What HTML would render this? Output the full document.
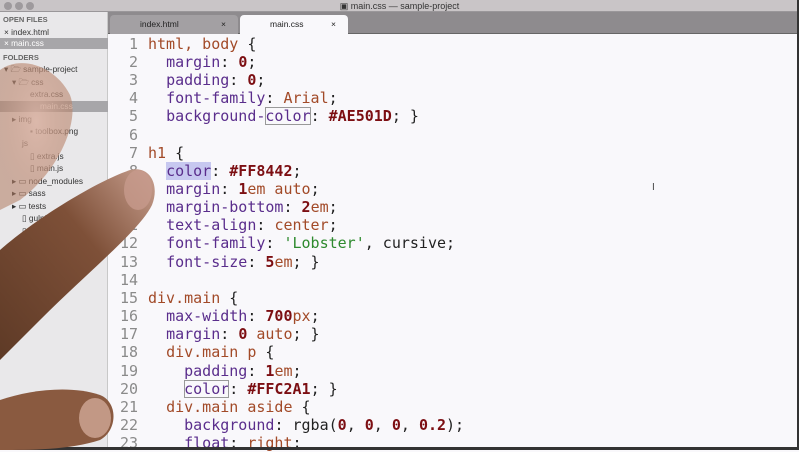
<!DOCTYPE html>
<html><head><meta charset="utf-8"><style>
*{margin:0;padding:0;box-sizing:border-box}
body{width:799px;height:450px;overflow:hidden;background:#f9f8fb;position:relative;font-family:"Liberation Sans",sans-serif}
#title{position:absolute;left:0;top:0;width:799px;height:12px;background:#c9c5c7;border-bottom:1px solid #9a979a;font-size:9px;color:#333;text-align:center;line-height:12px}
.dot{position:absolute;top:2px;width:8px;height:8px;border-radius:50%;background:#9e9a9d}
#side{position:absolute;left:0;top:12px;width:108px;height:438px;background:#e9e8ea;border-right:1px solid #c8c8c8;font-size:8.3px;color:#333}
#side div{position:absolute;white-space:nowrap}
.hd{color:#666;font-weight:bold;font-size:7.5px}
#tabs{position:absolute;left:108px;top:12px;width:691px;height:22px;background:#8e8b8e;border-bottom:1px solid #666}
.tab{position:absolute;top:3px;height:19px;font-size:8.5px;line-height:19px;padding-left:30px}
#code{position:absolute;left:108px;top:34px;width:689px;height:413px;font-family:"DejaVu Sans Mono","Liberation Mono",monospace;font-size:15px}
.ln{position:absolute;left:0;width:30px;text-align:right;color:#8a8a8a}
.c{position:absolute;left:40px;white-space:pre;color:#222}
.s{color:#a24a28}.p{color:#5a2d8c}.n{color:#7c0e12;font-weight:bold}.v{color:#a24a28}.g{color:#2e8a2e}
.box{outline:1px solid #999;outline-offset:-1px}
.sel{background:#c7c8f0}
</style></head><body>
<div id="title"><span class="dot" style="left:4px"></span><span class="dot" style="left:15px"></span><span class="dot" style="left:26px"></span>▣ main.css — sample-project</div>
<div id="side">
<div class="hd" style="left:3px;top:3px">OPEN FILES</div>
<div style="left:4px;top:15px">× index.html</div>
<div style="left:0;top:26px;width:108px;height:11px;background:#a7a6a9;color:#fff;padding-left:4px">× main.css</div>
<div class="hd" style="left:3px;top:41px">FOLDERS</div>
<div style="left:4px;top:52px">▾ 🗁 sample-project</div>
<div style="left:12px;top:65px">▾ 🗁 css</div>
<div style="left:30px;top:77px">extra.css</div>
<div style="left:0;top:89px;width:108px;height:11px;background:#a7a6a9;color:#fff;padding-left:40px">main.css</div>
<div style="left:12px;top:102px">▸ img</div>
<div style="left:30px;top:114px">▪ toolbox.png</div>
<div style="left:22px;top:126px">js</div>
<div style="left:30px;top:139px">▯ extra.js</div>
<div style="left:30px;top:151px">▯ main.js</div>
<div style="left:12px;top:164px">▸ ▭ node_modules</div>
<div style="left:12px;top:176px">▸ ▭ sass</div>
<div style="left:12px;top:189px">▸ ▭ tests</div>
<div style="left:22px;top:201px">▯ gulpfile.js</div>
<div style="left:22px;top:214px">▯ index.html</div>
</div>
<div id="tabs">
<div class="tab" style="left:2px;width:128px;background:#a3a0a3;color:#222;border-radius:4px 4px 0 0">index.html<span style="position:absolute;right:12px">×</span></div>
<div class="tab" style="left:132px;width:108px;background:#f9f8fb;color:#222;border-radius:4px 4px 0 0">main.css<span style="position:absolute;right:12px">×</span></div>
</div>
<div id="code">
<div class="ln" style="top:1px">1</div><div class="c" style="top:1px"><span class="s">html, body</span> {</div>
<div class="ln" style="top:19px">2</div><div class="c" style="top:19px">  <span class="p">margin</span>: <span class="n">0</span>;</div>
<div class="ln" style="top:37px">3</div><div class="c" style="top:37px">  <span class="p">padding</span>: <span class="n">0</span>;</div>
<div class="ln" style="top:55px">4</div><div class="c" style="top:55px">  <span class="p">font-family</span>: <span class="v">Arial</span>;</div>
<div class="ln" style="top:73px">5</div><div class="c" style="top:73px">  <span class="p">background-<span class="box">color</span></span>: <span class="n">#AE501D</span>; }</div>
<div class="ln" style="top:92px">6</div>
<div class="ln" style="top:110px">7</div><div class="c" style="top:110px"><span class="s">h1</span> {</div>
<div class="ln" style="top:128px">8</div><div class="c" style="top:128px">  <span class="p sel">color</span>: <span class="n">#FF8442</span>;</div>
<div class="ln" style="top:146px">9</div><div class="c" style="top:146px">  <span class="p">margin</span>: <span class="n">1</span><span class="v">em auto</span>;</div>
<div class="ln" style="top:164px">10</div><div class="c" style="top:164px">  <span class="p">margin-bottom</span>: <span class="n">2</span><span class="v">em</span>;</div>
<div class="ln" style="top:182px">11</div><div class="c" style="top:182px">  <span class="p">text-align</span>: <span class="v">center</span>;</div>
<div class="ln" style="top:200px">12</div><div class="c" style="top:200px">  <span class="p">font-family</span>: <span class="g">'Lobster'</span>, cursive;</div>
<div class="ln" style="top:219px">13</div><div class="c" style="top:219px">  <span class="p">font-size</span>: <span class="n">5</span><span class="v">em</span>; }</div>
<div class="ln" style="top:237px">14</div>
<div class="ln" style="top:255px">15</div><div class="c" style="top:255px"><span class="s">div.main</span> {</div>
<div class="ln" style="top:273px">16</div><div class="c" style="top:273px">  <span class="p">max-width</span>: <span class="n">700</span><span class="v">px</span>;</div>
<div class="ln" style="top:291px">17</div><div class="c" style="top:291px">  <span class="p">margin</span>: <span class="n">0</span> <span class="v">auto</span>; }</div>
<div class="ln" style="top:309px">18</div><div class="c" style="top:309px">  <span class="s">div.main p</span> {</div>
<div class="ln" style="top:328px">19</div><div class="c" style="top:328px">    <span class="p">padding</span>: <span class="n">1</span><span class="v">em</span>;</div>
<div class="ln" style="top:346px">20</div><div class="c" style="top:346px">    <span class="p box">color</span>: <span class="n">#FFC2A1</span>; }</div>
<div class="ln" style="top:364px">21</div><div class="c" style="top:364px">  <span class="s">div.main aside</span> {</div>
<div class="ln" style="top:382px">22</div><div class="c" style="top:382px">    <span class="p">background</span>: rgba(<span class="n">0</span>, <span class="n">0</span>, <span class="n">0</span>, <span class="n">0.2</span>);</div>
<div class="ln" style="top:400px">23</div><div class="c" style="top:400px">    <span class="p">float</span>: <span class="v">right</span>;</div>
</div>
<div style="position:absolute;left:652px;top:182px;font-size:10px;color:#444">I</div>
<div style="position:absolute;right:0;top:0;width:2px;height:450px;background:#333"></div>
<div style="position:absolute;left:0;bottom:0;width:799px;height:3px;background:#333"></div>
<svg width="799" height="450" style="position:absolute;left:0;top:0">
<defs>
<linearGradient id="f1" x1="0" y1="1" x2="1" y2="0"><stop offset="0" stop-color="#5e3a26"/><stop offset="0.6" stop-color="#7e5038"/><stop offset="1" stop-color="#c9a090"/></linearGradient>
<radialGradient id="f2" cx="0.5" cy="0.4" r="0.6"><stop offset="0" stop-color="#d9b0a0" stop-opacity="0.85"/><stop offset="1" stop-color="#b07a60" stop-opacity="0.55"/></radialGradient>
</defs>
<path d="M0,70 C20,55 55,65 70,95 C80,120 60,170 20,200 L0,210 Z" fill="url(#f2)"/>
<path d="M0,250 C40,215 100,180 130,170 C150,165 160,185 152,205 C140,230 90,270 40,320 L0,360 Z" fill="url(#f1)"/>
<ellipse cx="138" cy="190" rx="14" ry="20" fill="#c79a8c" opacity="0.8"/>
<path d="M0,400 C30,390 70,385 100,395 C118,402 118,430 100,440 C70,450 30,450 0,450 Z" fill="#8a5a40"/>
<ellipse cx="95" cy="418" rx="16" ry="20" fill="#cfa896" opacity="0.8"/>
</svg>
</body></html>
